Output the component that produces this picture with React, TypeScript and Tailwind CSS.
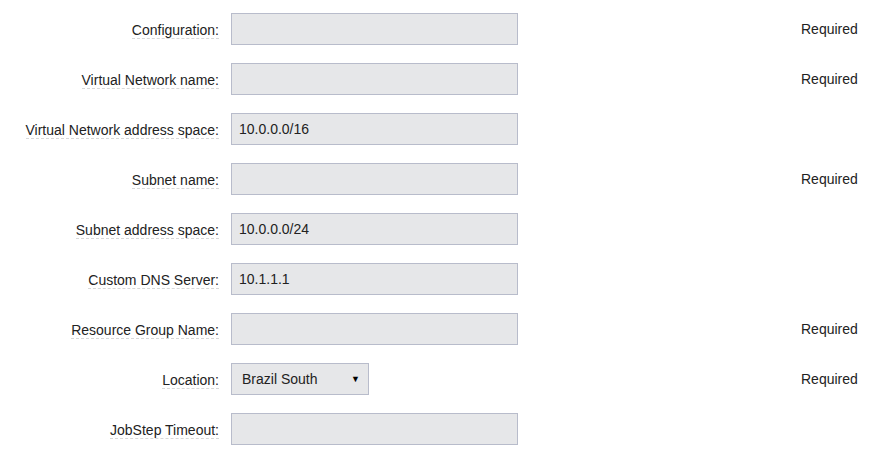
import React from "react";

type Row = { label: string; value?: string; required?: boolean; select?: boolean };

const rows: Row[] = [
  { label: "Configuration:", required: true },
  { label: "Virtual Network name:", required: true },
  { label: "Virtual Network address space:", value: "10.0.0.0/16" },
  { label: "Subnet name:", required: true },
  { label: "Subnet address space:", value: "10.0.0.0/24" },
  { label: "Custom DNS Server:", value: "10.1.1.1" },
  { label: "Resource Group Name:", required: true },
  { label: "Location:", select: true, required: true },
  { label: "JobStep Timeout:" },
];

export default function App() {
  return (
    <div
      className="w-[879px] h-[459px] bg-white text-[14px] text-[#222] pt-[13px]"
      style={{ fontFamily: '"Liberation Sans", Arial, sans-serif' }}
    >
      <div className="flex flex-col gap-[18px]">
        {rows.map((r) => (
          <div key={r.label} className="flex items-center h-[32px]">
            <div className="w-[220px] shrink-0 flex justify-end pr-[1px]">
              <span className="border-b border-dashed border-[#d8d8d8] leading-[16px] mt-[2px]">
                {r.label}
              </span>
            </div>
            <div className="w-[581px] shrink-0 pl-[11px]">
              {r.select ? (
                <div className="w-[138px] h-[32px] border border-[#b8bccb] bg-[#e6e7e9] flex items-center justify-between pl-[10px] pr-[8px]">
                  <span>Brazil South</span>
                  <span className="text-[9px] leading-none text-black">▼</span>
                </div>
              ) : (
                <div className="w-[287px] h-[32px] border border-[#b8bccb] bg-[#e6e7e9] flex items-center pl-[7px]">
                  {r.value ?? ""}
                </div>
              )}
            </div>
            {r.required && <div className="text-[#222]">Required</div>}
          </div>
        ))}
      </div>
    </div>
  );
}
